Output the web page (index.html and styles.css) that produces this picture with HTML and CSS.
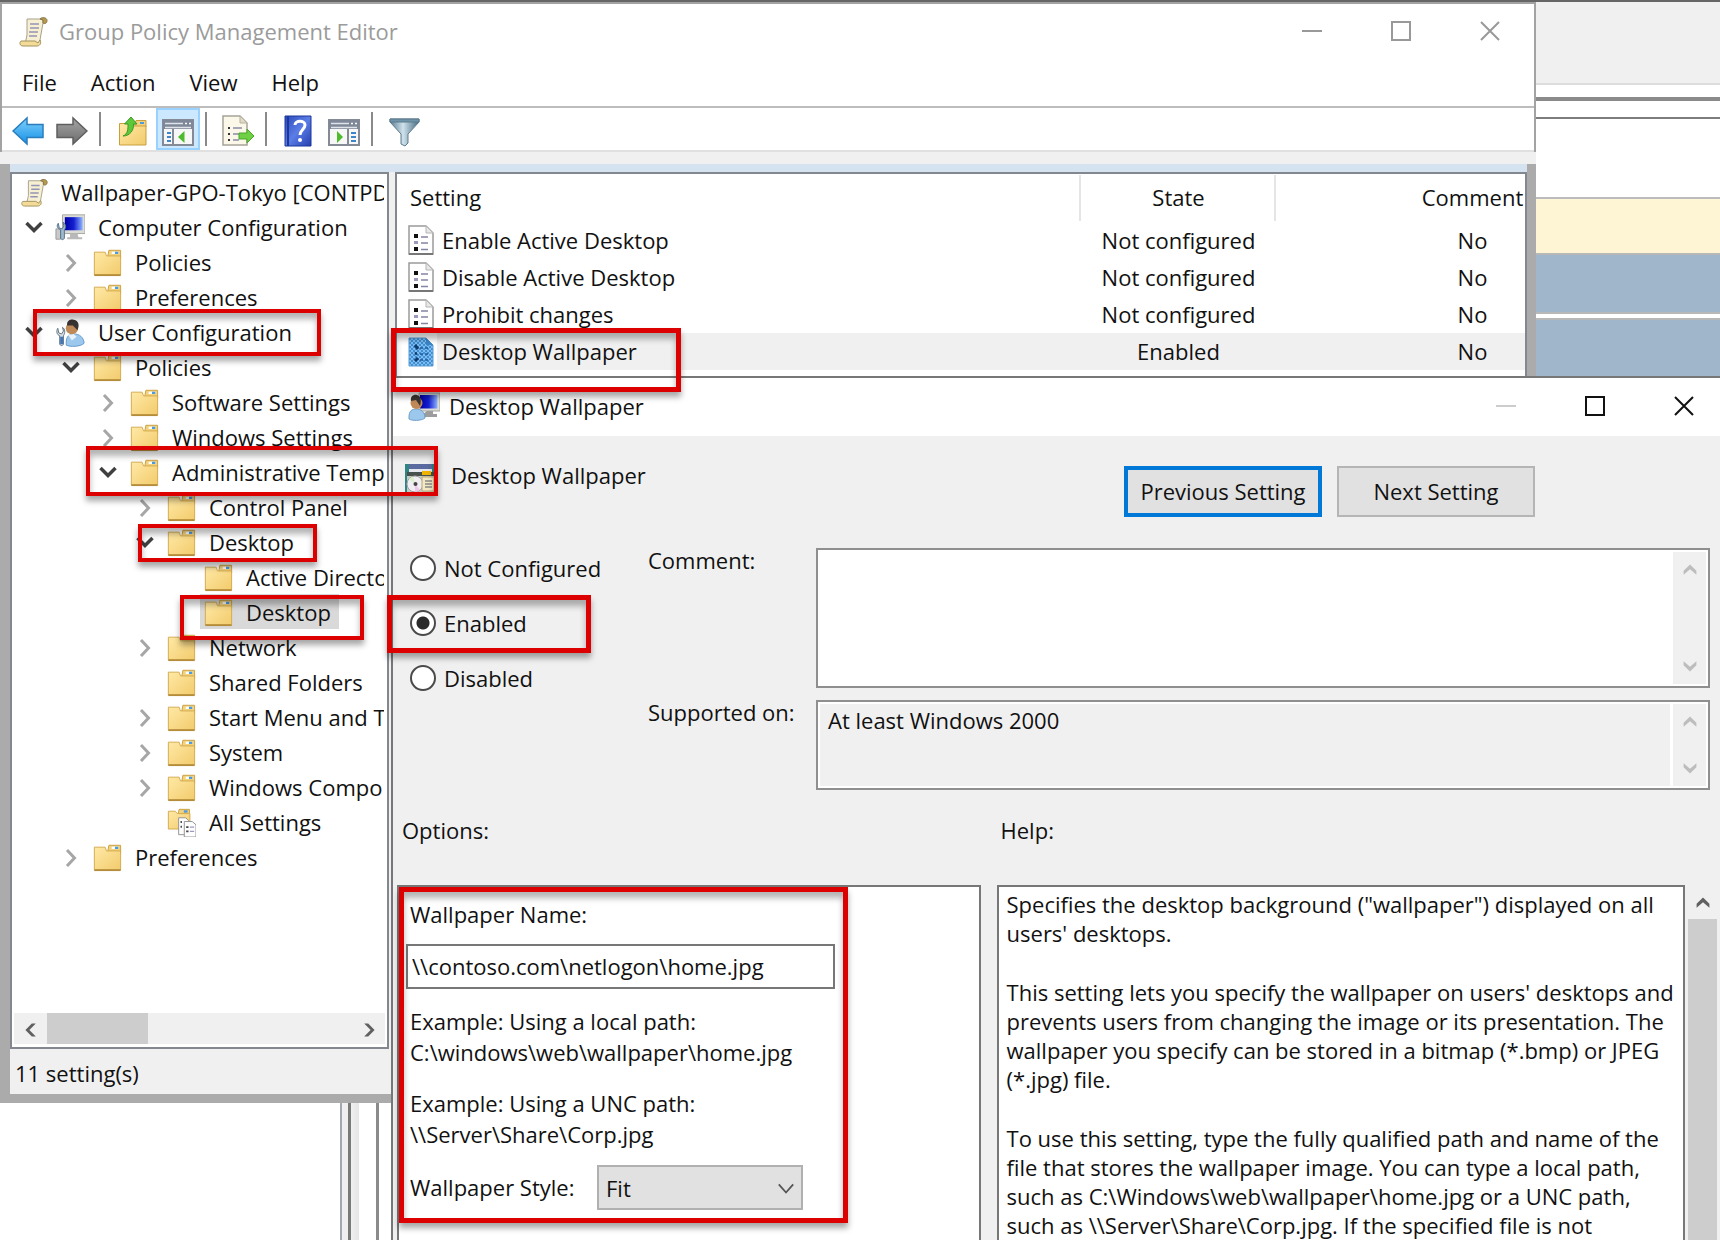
FILE: index.html
```html
<!DOCTYPE html>
<html lang="en">

<head>
    <meta charset="UTF-8">
    <meta name="viewport" content="width=device-width, initial-scale=1.0">
    <title>Group Policy Management Editor</title>
    <link rel="stylesheet" href="styles.css">
</head>

<body>

    <!-- icon set -->
    <svg class="defs" aria-hidden="true">
        <defs>
            <linearGradient id="gFolder" x1="0" y1="0" x2="1" y2="1">
                <stop offset="0" stop-color="#ffe9a6" />
                <stop offset="1" stop-color="#f2cb6c" />
            </linearGradient>
            <linearGradient id="gBlue" x1="0" y1="0" x2="0" y2="1">
                <stop offset="0" stop-color="#7fd0fb" />
                <stop offset="1" stop-color="#1590e6" />
            </linearGradient>
            <linearGradient id="gGray" x1="0" y1="0" x2="0" y2="1">
                <stop offset="0" stop-color="#a5a5a5" />
                <stop offset="1" stop-color="#6c6c6c" />
            </linearGradient>
            <linearGradient id="gScreen" x1="0" y1="0" x2="1" y2="0">
                <stop offset="0" stop-color="#0000a8" />
                <stop offset=".5" stop-color="#1420d0" />
                <stop offset="1" stop-color="#8fb4ff" />
            </linearGradient>
            <linearGradient id="gBook" x1="0" y1="0" x2="1" y2="1">
                <stop offset="0" stop-color="#2c49bb" />
                <stop offset=".5" stop-color="#5b7de6" />
                <stop offset="1" stop-color="#2440b0" />
            </linearGradient>
            <linearGradient id="gFunnel" x1="0" y1="0" x2="1" y2="0">
                <stop offset="0" stop-color="#5a7d92" />
                <stop offset=".45" stop-color="#cfe2ec" />
                <stop offset="1" stop-color="#456a80" />
            </linearGradient>
            <pattern id="dots" width="4" height="4" patternUnits="userSpaceOnUse">
                <rect width="4" height="4" fill="#7ebcf0" />
                <rect width="2" height="2" fill="#3f8fd2" />
                <rect x="2" y="2" width="2" height="2" fill="#3f8fd2" />
            </pattern>
        </defs>

        <symbol id="scroll" viewBox="0 0 32 32">
            <path d="M10 4H26V8L23 25V29H8L10 20Z" fill="#f6efd2" stroke="#a8a08a" />
            <path d="M23 4C24 2 30 2 30 5.500C30 9 27 9 26 8V5Z" fill="#b89a4c" stroke="#857348" />
            <path d="M4 26H18L21 28L23 25C25 29 22 31 20 31H6C3 31 2 28 4 26Z" fill="#f3dc98" stroke="#a3925f" />
            <path d="M13 9H22M13 13H22M12 17H21M12 21H20" stroke="#9494b4" stroke-width="1.600" />
        </symbol>

        <symbol id="folder" viewBox="0 0 32 32">
            <path d="M17 9L18 3.500H30.500V12H17Z" fill="#f3d27d" stroke="#c99f3e" />
            <path d="M21 5H28V7.500H21Z" fill="#fff" />
            <path d="M24.500 5H28V7.500H24.500Z" fill="#4b9be0" />
            <path d="M2.500 5.500H14L15.500 9.500H30.500V30H2.500Z" fill="url(#gFolder)" stroke="#d3a94b" />
            <path d="M2.500 30H30.500" stroke="#b58d3a" stroke-width="2" />
        </symbol>

        <symbol id="allsettings" viewBox="0 0 32 32">
            <path d="M13 7L14 2.500H25V12H13Z" fill="#f3d27d" stroke="#c99f3e" />
            <path d="M19 3.500H23V6H19Z" fill="#4b9be0" />
            <path d="M2.500 4.500H10L12 7H25.500V23.500H2.500Z" fill="url(#gFolder)" stroke="#d3a94b" />
            <path d="M13.500 11.500H21L24 14.500V29.500H13.500Z" fill="#fff" stroke="#8f8f8f" />
            <path d="M19.500 15.500H28L32 19V32H19.500Z" fill="#fff" stroke="#8f8f8f" />
            <path d="M15.500 16H17M15.500 21H17M21.500 21.500H24M21.500 26H24" stroke="#444" stroke-width="2" />
            <path d="M25.500 21.500H30M25.500 26H30" stroke="#9a9ac0" stroke-width="1.500" />
        </symbol>

        <symbol id="computer" viewBox="0 0 32 32">
            <path d="M8 3H32V23H8Z" fill="#dcdcd6" stroke="#a5a5a0" />
            <path d="M10.500 5.500H29.500V19.500H10.500Z" fill="url(#gScreen)" />
            <path d="M16 23H24L25 27H29V29H13V27H16Z" fill="#b9b9b9" />
            <path d="M1 18H6V29H1Z" fill="#c9c9c9" stroke="#999" />
            <path d="M3.500 12L4.500 17L7.500 18L9.500 15L8.500 11C12 13 12 17 10 19V28C9 30 7 30 6 28V19C3 18 1 15 3.500 12Z" fill="#9fb9cc" stroke="#50708a" />
        </symbol>

        <symbol id="user" viewBox="0 0 32 32">
            <path d="M12 27C12 20 16 18 20 18C26 18 31 22 31 28C27 32 16 32 12 30Z" fill="#9cc8ee" stroke="#5f97c9" />
            <path d="M14 19L20 18L23 21L18 25Z" fill="#e8f2fb" />
            <circle cx="18" cy="12" r="6.500" fill="#c08a58" />
            <path d="M13 9C12 4 17 2 20 3C26 4 26 10 24 14L19 9Z" fill="#3a3532" />
            <path d="M3 12L4 17L7 18L9 15L8 11C11 13 11 17 9 20V29C8 31 6 31 5 29V20C2 19 1 15 3 12Z" fill="#d7dde2" stroke="#5b6f80" />
            <path d="M5.500 21H8.500V29H5.500Z" fill="#3e76b8" />
        </symbol>

        <symbol id="usermonitor" viewBox="0 0 32 32">
            <path d="M11 3H32V21H11Z" fill="#dcdcd6" stroke="#a5a5a0" />
            <path d="M12 5H29.500V18.500H12Z" fill="url(#gScreen)" />
            <path d="M19 21H25V24H29V27H15V24Z" fill="#9c9c9c" />
            <path d="M1 27C1 21 4 19 8 19C13 19 17 22 17 28C13 31 4 31 1 29Z" fill="#9cc8ee" stroke="#6f9fc9" />
            <circle cx="8.500" cy="13" r="6" fill="#c08a58" />
            <path d="M3 11C2 6 6 4 9 5C14 6 13 13 12 16L8 10Z" fill="#3a3532" />
        </symbol>

        <symbol id="policy" viewBox="0 0 28 32">
            <path d="M2 1H19L26 8V29H2Z" fill="#fff" stroke="#9b9b9b" stroke-width="1.500" />
            <path d="M19 1V8H26Z" fill="#e8e8e8" stroke="#b5b5b5" />
            <path d="M2 29H26" stroke="#777" stroke-width="2" />
            <path d="M7 11H11M7 24H11" stroke="#111" stroke-width="4" />
            <path d="M7 17.500H11" stroke="#9a9ac0" stroke-width="3" />
            <path d="M14 12H21M14 18H21M14 24.500H21" stroke="#8484a4" stroke-width="1.600" />
        </symbol>

        <symbol id="policysel" viewBox="0 0 28 32">
            <path d="M2 2H19L26 9V30H2Z" fill="url(#dots)" stroke="#5a9bd5" />
            <path d="M19 2V9H26Z" fill="#3a86c8" />
            <path d="M8 9L11 13M8 18L10 17M8 25L11 22" stroke="#123a6a" stroke-width="3" />
            <path d="M13 12H22M13 18H22M13 24H22" stroke="#1d5c9c" stroke-width="1.600" stroke-dasharray="3 2" />
        </symbol>

        <symbol id="template" viewBox="0 0 32 32">
            <path d="M1 3H32V32H1Z" fill="#2d8682" />
            <path d="M5 3H28V8H5Z" fill="#5b6ba0" />
            <path d="M5 8H28V11H5Z" fill="#e6e6ee" />
            <path d="M3 11H31V15H3Z" fill="#47524e" />
            <path d="M18 10H27V14H18Z" fill="#efb400" />
            <path d="M3 15H31V32H3Z" fill="#c9c9c4" />
            <circle cx="11" cy="23" r="8" fill="#f1edf4" stroke="#a0a0a0" />
            <path d="M11 23L5 18A8 8 0 0 1 9 15.500Z" fill="#d8f2c8" />
            <path d="M11 23L16 29A8 8 0 0 1 11 31Z" fill="#eec8e8" />
            <circle cx="11.500" cy="23" r="2" fill="#444" />
            <path d="M18 16H30V30H18Z" fill="#f3e8c4" stroke="#b9a670" />
            <path d="M21 20H28M21 23H28M21 26H28" stroke="#888" stroke-width="1.500" />
        </symbol>

        <symbol id="back" viewBox="0 0 32 32">
            <path d="M1 16L15 3V9.500H31V22.500H15V29Z" fill="url(#gBlue)" stroke="#2a7dbd" stroke-width="1.500" />
        </symbol>

        <symbol id="forward" viewBox="0 0 32 32">
            <path d="M31 16L17 3V9.500H1V22.500H17V29Z" fill="url(#gGray)" stroke="#5f5f5f" stroke-width="1.500" />
        </symbol>

        <symbol id="up" viewBox="0 0 32 32">
            <path d="M19 9L20 5.500H30V12H19Z" fill="#f3d27d" stroke="#c99f3e" />
            <path d="M24 7H28V9H24Z" fill="#4b9be0" />
            <path d="M3.500 8.500H13L15 11H30V30H3.500Z" fill="url(#gFolder)" stroke="#c99f3e" />
            <path d="M7 21C12 19 12 14 12 9H8.500L15 2L21 9H17.500C18 15 14 21 7 21Z" fill="#5cc83a" stroke="#3c9a24" />
        </symbol>

        <symbol id="treepane" viewBox="0 0 32 32">
            <path d="M1 5H31V30H1Z" fill="#f7f7f7" stroke="#848a96" stroke-width="2" />
            <path d="M1 5H31V14H1Z" fill="#7f8898" />
            <path d="M3 8.500H21M3 12.500H29" stroke="#dfe3ea" stroke-width="1.500" />
            <path d="M23 8.500H25M27 8.500H29" stroke="#fff" stroke-width="1.500" />
            <path d="M11 14V30" stroke="#848a96" stroke-width="2" />
            <path d="M5 18H9M5 22H9M5 26H9" stroke="#3d86c9" stroke-width="2" />
            <path d="M22.500 16V28L16 22Z" fill="#4dbb2b" />
        </symbol>

        <symbol id="actionpane" viewBox="0 0 32 32">
            <path d="M1 5H31V30H1Z" fill="#f7f7f7" stroke="#848a96" stroke-width="2" />
            <path d="M1 5H31V14H1Z" fill="#7f8898" />
            <path d="M3 8.500H21M3 12.500H29" stroke="#dfe3ea" stroke-width="1.500" />
            <path d="M23 8.500H25M27 8.500H29" stroke="#fff" stroke-width="1.500" />
            <path d="M20 14V30" stroke="#848a96" stroke-width="2" />
            <path d="M23 18H28M23 22H28M23 26H28" stroke="#3d86c9" stroke-width="2" />
            <path d="M9 16V28L15 22Z" fill="#4dbb2b" />
        </symbol>

        <symbol id="export" viewBox="0 0 32 32">
            <path d="M1 1H18L25 8V30H1Z" fill="#fbf8ea" stroke="#a7a496" stroke-width="1.500" />
            <path d="M18 1V8H25Z" fill="#e0dcc8" stroke="#b5b19f" />
            <path d="M6 13H8M6 19H8M6 25H8" stroke="#333" stroke-width="2" />
            <path d="M11 13H20M11 19H17M11 25H17" stroke="#8a8aa8" stroke-width="1.600" />
            <path d="M32 21L25 14V18H17V24H25V28Z" fill="#6fd044" stroke="#4aa828" />
        </symbol>

        <symbol id="help" viewBox="0 0 32 32">
            <path d="M3 1H29V31H3Z" fill="url(#gBook)" stroke="#1c379c" />
            <path d="M6 1V31" stroke="#1c379c" stroke-width="2" />
            <path d="M13 10C13 5 23 5 23 10C23 14 18 15 18 20" fill="none" stroke="#fff" stroke-width="3" />
            <circle cx="18" cy="25" r="2" fill="#fff" />
        </symbol>

        <symbol id="funnel" viewBox="0 0 32 32">
            <path d="M2 4H31V7L20 19V28L17 31L13 29V19L2 7Z" fill="url(#gFunnel)" stroke="#5d7b8c" />
            <path d="M2 4H31V7H2Z" fill="#6f93a8" stroke="#5d7b8c" />
        </symbol>

        <symbol id="down" viewBox="0 0 20 20">
            <path d="M2.500 6L10 13.500L17.500 6" fill="none" stroke="currentColor" stroke-width="3.500" />
        </symbol>
        <symbol id="right" viewBox="0 0 20 20">
            <path d="M6 3L13.500 11L6 19" fill="none" stroke="currentColor" stroke-width="3" />
        </symbol>

        <symbol id="sbup" viewBox="0 0 20 20">
            <path d="M2 16V11L10 3L18 11V16L10 9Z" fill="currentColor" />
        </symbol>
        <symbol id="sbdown" viewBox="0 0 20 20">
            <path d="M2 4V9L10 17L18 9V4L10 11Z" fill="currentColor" />
        </symbol>
        <symbol id="sbleft" viewBox="0 0 20 20">
            <path d="M16 2H11L3 10L11 18H16L8 10Z" fill="currentColor" />
        </symbol>
        <symbol id="sbright" viewBox="0 0 20 20">
            <path d="M4 2H9L17 10L9 18H4L12 10Z" fill="currentColor" />
        </symbol>

        <symbol id="min" viewBox="0 0 20 20">
            <path d="M0 10H20" stroke="currentColor" stroke-width="2" />
        </symbol>
        <symbol id="max" viewBox="0 0 20 20">
            <path d="M1 1H19V19H1Z" fill="none" stroke="currentColor" stroke-width="2" />
        </symbol>
        <symbol id="close" viewBox="0 0 20 20">
            <path d="M1 1L19 19M19 1L1 19" stroke="currentColor" stroke-width="2" />
        </symbol>
    </svg>

    <div class="desktop">

        <!-- window behind -->
        <div class="backdrop">
            <div class="backTop"></div>
            <div class="backLines"></div>
            <div class="backHead"></div>
            <div class="backYellow"></div>
            <div class="backBlue"></div>
            <div class="backBlue"></div>
            <div class="backRest">
                <div class="backSplit"></div>
            </div>
        </div>

        <!-- editor window -->
        <section class="editor">
            <header class="titlebar">
                <svg class="icon"><use href="#scroll" /></svg>
                <h1 class="caption">Group Policy Management Editor</h1>
                <div class="winbtns">
                    <button type="button" aria-label="Minimize"><svg><use href="#min" /></svg></button>
                    <button type="button" aria-label="Maximize"><svg><use href="#max" /></svg></button>
                    <button type="button" aria-label="Close"><svg><use href="#close" /></svg></button>
                </div>
            </header>

            <nav class="menubar">
                <button type="button">File</button>
                <button type="button">Action</button>
                <button type="button">View</button>
                <button type="button">Help</button>
            </nav>

            <div class="toolbar">
                <button type="button" aria-label="Back"><svg class="icon"><use href="#back" /></svg></button>
                <button type="button" aria-label="Forward"><svg class="icon"><use href="#forward" /></svg></button>
                <span class="sep"></span>
                <button type="button" aria-label="Up one level"><svg class="icon"><use href="#up" /></svg></button>
                <button type="button" class="on" aria-label="Show console tree"><svg class="icon"><use href="#treepane" /></svg></button>
                <span class="sep"></span>
                <button type="button" aria-label="Export list"><svg class="icon"><use href="#export" /></svg></button>
                <span class="sep"></span>
                <button type="button" aria-label="Help"><svg class="icon"><use href="#help" /></svg></button>
                <button type="button" class="next" aria-label="Show action pane"><svg class="icon"><use href="#actionpane" /></svg></button>
                <span class="sep"></span>
                <button type="button" aria-label="Filter"><svg class="icon"><use href="#funnel" /></svg></button>
            </div>

            <div class="client">
                <div class="panes">
                    <div class="treePane">
                        <div class="tree">
                            <div class="row root"><svg class="icon"><use href="#scroll" /></svg><span>Wallpaper-GPO-Tokyo [CONTPD</span></div>
                            <ul>
                                <li>
                                    <div class="row"><button type="button" class="twisty open" aria-label="Collapse"><svg><use href="#down" /></svg></button><svg class="icon"><use href="#computer" /></svg><span>Computer Configuration</span></div>
                                    <ul>
                                        <li><div class="row"><button type="button" class="twisty" aria-label="Expand"><svg><use href="#right" /></svg></button><svg class="icon"><use href="#folder" /></svg><span>Policies</span></div></li>
                                        <li><div class="row"><button type="button" class="twisty" aria-label="Expand"><svg><use href="#right" /></svg></button><svg class="icon"><use href="#folder" /></svg><span>Preferences</span></div></li>
                                    </ul>
                                </li>
                                <li>
                                    <div class="row"><button type="button" class="twisty open" aria-label="Collapse"><svg><use href="#down" /></svg></button><svg class="icon"><use href="#user" /></svg><span>User Configuration</span></div>
                                    <ul>
                                        <li>
                                            <div class="row"><button type="button" class="twisty open" aria-label="Collapse"><svg><use href="#down" /></svg></button><svg class="icon"><use href="#folder" /></svg><span>Policies</span></div>
                                            <ul>
                                                <li><div class="row"><button type="button" class="twisty" aria-label="Expand"><svg><use href="#right" /></svg></button><svg class="icon"><use href="#folder" /></svg><span>Software Settings</span></div></li>
                                                <li><div class="row"><button type="button" class="twisty" aria-label="Expand"><svg><use href="#right" /></svg></button><svg class="icon"><use href="#folder" /></svg><span>Windows Settings</span></div></li>
                                                <li>
                                                    <div class="row"><button type="button" class="twisty open" aria-label="Collapse"><svg><use href="#down" /></svg></button><svg class="icon"><use href="#folder" /></svg><span>Administrative Temp</span></div>
                                                    <ul>
                                                        <li><div class="row"><button type="button" class="twisty" aria-label="Expand"><svg><use href="#right" /></svg></button><svg class="icon"><use href="#folder" /></svg><span>Control Panel</span></div></li>
                                                        <li>
                                                            <div class="row"><button type="button" class="twisty open" aria-label="Collapse"><svg><use href="#down" /></svg></button><svg class="icon"><use href="#folder" /></svg><span>Desktop</span></div>
                                                            <ul>
                                                                <li><div class="row leaf"><svg class="icon"><use href="#folder" /></svg><span>Active Directo</span></div></li>
                                                                <li><div class="row leaf selected"><svg class="icon"><use href="#folder" /></svg><span>Desktop</span></div></li>
                                                            </ul>
                                                        </li>
                                                        <li><div class="row"><button type="button" class="twisty" aria-label="Expand"><svg><use href="#right" /></svg></button><svg class="icon"><use href="#folder" /></svg><span>Network</span></div></li>
                                                        <li><div class="row leaf"><svg class="icon"><use href="#folder" /></svg><span>Shared Folders</span></div></li>
                                                        <li><div class="row"><button type="button" class="twisty" aria-label="Expand"><svg><use href="#right" /></svg></button><svg class="icon"><use href="#folder" /></svg><span>Start Menu and Ta</span></div></li>
                                                        <li><div class="row"><button type="button" class="twisty" aria-label="Expand"><svg><use href="#right" /></svg></button><svg class="icon"><use href="#folder" /></svg><span>System</span></div></li>
                                                        <li><div class="row"><button type="button" class="twisty" aria-label="Expand"><svg><use href="#right" /></svg></button><svg class="icon"><use href="#folder" /></svg><span>Windows Compo</span></div></li>
                                                        <li><div class="row leaf"><svg class="icon"><use href="#allsettings" /></svg><span>All Settings</span></div></li>
                                                    </ul>
                                                </li>
                                            </ul>
                                        </li>
                                        <li><div class="row"><button type="button" class="twisty" aria-label="Expand"><svg><use href="#right" /></svg></button><svg class="icon"><use href="#folder" /></svg><span>Preferences</span></div></li>
                                    </ul>
                                </li>
                            </ul>
                        </div>
                        <div class="hscroll">
                            <button type="button" aria-label="Scroll left"><svg><use href="#sbleft" /></svg></button>
                            <div class="track"><div class="thumb"></div></div>
                            <button type="button" aria-label="Scroll right"><svg><use href="#sbright" /></svg></button>
                        </div>
                    </div>

                    <div class="listPane">
                        <table>
                            <thead>
                                <tr>
                                    <th class="colSetting">Setting</th>
                                    <th class="colState">State</th>
                                    <th class="colComment">Comment</th>
                                </tr>
                            </thead>
                            <tbody>
                                <tr>
                                    <td><div class="name"><svg class="icon"><use href="#policy" /></svg><span>Enable Active Desktop</span></div></td>
                                    <td>Not configured</td>
                                    <td>No</td>
                                </tr>
                                <tr>
                                    <td><div class="name"><svg class="icon"><use href="#policy" /></svg><span>Disable Active Desktop</span></div></td>
                                    <td>Not configured</td>
                                    <td>No</td>
                                </tr>
                                <tr>
                                    <td><div class="name"><svg class="icon"><use href="#policy" /></svg><span>Prohibit changes</span></div></td>
                                    <td>Not configured</td>
                                    <td>No</td>
                                </tr>
                                <tr class="current">
                                    <td><div class="name"><svg class="icon"><use href="#policysel" /></svg><span>Desktop Wallpaper</span></div></td>
                                    <td>Enabled</td>
                                    <td>No</td>
                                </tr>
                            </tbody>
                        </table>
                    </div>
                </div>
                <footer class="status">11 setting(s)</footer>
            </div>
        </section>

        <!-- setting dialog -->
        <section class="dialog">
            <header class="titlebar">
                <svg class="icon"><use href="#usermonitor" /></svg>
                <h2 class="caption">Desktop Wallpaper</h2>
                <div class="winbtns">
                    <button type="button" disabled aria-label="Minimize"><svg><use href="#min" /></svg></button>
                    <button type="button" aria-label="Maximize"><svg><use href="#max" /></svg></button>
                    <button type="button" aria-label="Close"><svg><use href="#close" /></svg></button>
                </div>
            </header>

            <div class="intro">
                <svg class="icon"><use href="#template" /></svg>
                <span class="policyName">Desktop Wallpaper</span>
                <button type="button" class="btn focused">Previous Setting</button>
                <button type="button" class="btn">Next Setting</button>
            </div>

            <div class="state">
                <div class="radios">
                    <label><input type="radio" name="state" value="none">Not Configured</label>
                    <label><input type="radio" name="state" value="on" checked>Enabled</label>
                    <label><input type="radio" name="state" value="off">Disabled</label>
                </div>
                <div class="fields">
                    <label for="comment">Comment:</label>
                    <div class="memo">
                        <textarea id="comment"></textarea>
                        <div class="gutter">
                            <svg><use href="#sbup" /></svg>
                            <svg><use href="#sbdown" /></svg>
                        </div>
                    </div>
                    <label for="supported">Supported on:</label>
                    <div class="memo short">
                        <textarea id="supported" readonly>At least Windows 2000</textarea>
                        <div class="gutter">
                            <svg><use href="#sbup" /></svg>
                            <svg><use href="#sbdown" /></svg>
                        </div>
                    </div>
                </div>
            </div>

            <div class="columns">
                <div class="column">
                    <h3>Options:</h3>
                    <div class="box options">
                        <label for="wpName">Wallpaper Name:</label>
                        <input type="text" id="wpName" value="\\contoso.com\netlogon\home.jpg">
                        <p>Example: Using a local path:<br>C:\windows\web\wallpaper\home.jpg</p>
                        <p>Example: Using a UNC path:<br>\\Server\Share\Corp.jpg</p>
                        <div class="styleRow">
                            <label for="wpStyle">Wallpaper Style:</label>
                            <div class="selectWrap">
                                <select id="wpStyle">
                                    <option>Fit</option>
                                </select>
                                <svg viewBox="0 0 20 20"><path d="M2 6L10 15L18 6" fill="none" stroke="#555" stroke-width="2" /></svg>
                            </div>
                        </div>
                    </div>
                </div>

                <div class="column">
                    <h3 class="helpTitle">Help:</h3>
                    <div class="helpRow">
                        <div class="box help">
                            <p>Specifies the desktop background ("wallpaper") displayed on all<br>users' desktops.</p>
                            <p>This setting lets you specify the wallpaper on users' desktops and<br>prevents users from changing the image or its presentation. The<br>wallpaper you specify can be stored in a bitmap (*.bmp) or JPEG<br>(*.jpg) file.</p>
                            <p>To use this setting, type the fully qualified path and name of the<br>file that stores the wallpaper image. You can type a local path,<br>such as C:\Windows\web\wallpaper\home.jpg or a UNC path,<br>such as \\Server\Share\Corp.jpg. If the specified file is not</p>
                        </div>
                        <div class="vscroll">
                            <button type="button" aria-label="Scroll up"><svg><use href="#sbup" /></svg></button>
                            <div class="thumb"></div>
                        </div>
                    </div>
                </div>
            </div>
        </section>

        <!-- callouts -->
        <div class="mark markUser"></div>
        <div class="mark markAdmin"></div>
        <div class="mark markDesktop"></div>
        <div class="mark markSubDesktop"></div>
        <div class="mark thick markSetting"></div>
        <div class="mark thick markEnabled"></div>
        <div class="mark thick markOptions"></div>
    </div>

</body>

</html>
```
FILE: styles.css
```css
* {
    box-sizing: border-box;
}

body {
    margin: 0;
    font-family: "Open Sans", "Noto Sans", sans-serif;
    font-size: 22px;
    line-height: 24px;
    color: #111;
}

button,
input,
select,
textarea {
    font: inherit;
    color: inherit;
    margin: 0;
    padding: 0;
    border: 0;
    border-radius: 0;
    background: none;
}

h1,
h2,
h3,
p,
ul {
    margin: 0;
    padding: 0;
    font: inherit;
    list-style: none;
}

.defs {
    position: absolute;
    width: 0;
    height: 0;
}

.icon {
    width: 32px;
    height: 32px;
    flex: none;
}

.desktop {
    position: relative;
    height: 100vh;
    overflow: hidden;
    background: #fff;
}

/* window behind */
.backdrop {
    display: flex;
    flex-direction: column;
    height: 100%;
}

.backTop {
    height: 85px;
    background: #f0f0f0;
    border-top: 2px solid #666;
    border-bottom: 2px solid #ddd;
}

.backLines {
    height: 22px;
    margin-top: 12px;
    border-top: 4px solid #8a8a8a;
    border-bottom: 2px solid #7d7d7d;
}

.backHead {
    height: 80px;
    border-bottom: 2px solid #bbb;
}

.backYellow {
    height: 54px;
    background: #fdf5d3;
}

.backBlue {
    height: 61px;
    margin-bottom: 4px;
    background: #a0b6cb;
    border-top: 2px solid #b8b8b8;
    border-bottom: 2px solid #b8b8b8;
}

.backRest {
    flex: 1;
    display: flex;
}

.backSplit {
    margin-left: 340px;
    width: 39px;
    border-left: 2px solid #a3a8b3;
    border-right: 3px solid #8a8a8a;
    background: linear-gradient(to right, #f0f0f0 6px, #7a7a7a 6px, #7a7a7a 9px, #f0f0f0 9px, #e6e6e6 17px, #fff 17px);
}

/* editor window */
.editor {
    position: absolute;
    top: 2px;
    left: 0;
    right: 184px;
    bottom: 137px;
    display: flex;
    flex-direction: column;
    background: #fff;
    border: 2px solid #a3a3a3;
    border-bottom: 0;
}

.titlebar {
    display: flex;
    align-items: center;
    height: 56px;
    padding-left: 15px;
    background: #fff;
    flex: none;
}

.editor .caption {
    margin-left: 10px;
    color: #9b9b9b;
}

.winbtns {
    display: flex;
    margin-left: auto;
    color: #999;
}

.winbtns button {
    width: 89px;
    height: 52px;
    display: flex;
    align-items: center;
    justify-content: center;
}

.winbtns svg {
    width: 20px;
    height: 20px;
}

.editor .titlebar {
    padding-bottom: 2px;
}

.menubar {
    display: flex;
    align-items: center;
    gap: 34px;
    height: 48px;
    padding: 0 20px 2px;
    border-bottom: 2px solid #bdbdbd;
    flex: none;
}

.toolbar {
    display: flex;
    align-items: center;
    height: 44px;
    padding-left: 4px;
    border-bottom: 2px solid #e0e0e0;
    flex: none;
}

.toolbar button {
    display: flex;
    align-items: center;
    justify-content: center;
    width: 44px;
    height: 42px;
    padding-top: 4px;
}

.toolbar .on,
.toolbar .next {
    margin-left: 2px;
}

.toolbar .on {
    background: #cce8ff;
    border: 2px solid #99d1ff;
}

.toolbar .sep {
    width: 2px;
    height: 34px;
    margin: 0 9px 0 5px;
    background: #8a8a8a;
}

.client {
    flex: 1;
    min-height: 0;
    display: flex;
    flex-direction: column;
    margin: 0 -2px;
    padding: 0 9px 9px 10px;
    background: #ababab;
    border-top: 12px solid #f0f0f0;
}

.panes {
    flex: 1;
    min-height: 0;
    display: flex;
    gap: 6px;
    background: #f0f0f0;
    border-top: 8px solid #d5e2f0;
}

.treePane,
.listPane {
    background: #fff;
    border: 2px solid #828790;
    overflow: hidden;
}

.treePane {
    width: 379px;
    flex: none;
    display: flex;
    flex-direction: column;
    padding: 0 2px;
}

.tree {
    flex: 1;
    margin-right: 1px;
    overflow: hidden;
}

.tree ul ul {
    padding-left: 37px;
}

.row {
    display: flex;
    align-items: center;
    height: 35px;
    padding-left: 10px;
    white-space: nowrap;
}

.row.root {
    padding-left: 5px;
}

.row.leaf {
    padding-left: 41px;
}

.row .icon {
    width: 30px;
    height: 30px;
    margin-right: 13px;
}

.row.root .icon {
    margin-right: 12px;
}

.row.selected {
    width: max-content;
    margin-left: 38px;
    padding: 0 8px 0 3px;
    background: #d9d9d9;
}

.twisty {
    width: 20px;
    height: 20px;
    margin-right: 11px;
    color: #a6a6a6;
}

.twisty.open {
    color: #404040;
}

.twisty svg {
    display: block;
    width: 20px;
    height: 20px;
}

.hscroll {
    display: flex;
    height: 31px;
    margin-bottom: 3px;
    background: #f0f0f0;
    flex: none;
}

.hscroll button {
    width: 33px;
    color: #606060;
}

.hscroll svg,
.gutter svg,
.vscroll svg {
    width: 16px;
    height: 16px;
}

.track {
    flex: 1;
}

.thumb {
    background: #cdcdcd;
}

.track .thumb {
    width: 101px;
    height: 100%;
}

.listPane {
    flex: 1;
    min-width: 0;
}

.listPane table {
    width: calc(100% + 144px);
    table-layout: fixed;
    border-collapse: collapse;
}

.listPane th {
    height: 48px;
    padding: 0 0 2px;
    font-weight: normal;
    background: linear-gradient(#e5e5e5, #e5e5e5) right center / 2px 46px no-repeat;
}

.listPane th.colSetting {
    padding-left: 13px;
    text-align: left;
}

.colState {
    width: 195px;
}

.colComment {
    width: 393px;
}

.listPane td {
    height: 37px;
    padding: 0 0 2px;
    text-align: center;
}

.listPane td:first-child {
    padding: 0;
}

.name {
    display: flex;
    align-items: center;
    height: 37px;
    padding-left: 10px;
}

.name .icon {
    width: 28px;
    margin-right: 2px;
}

.name span {
    flex: 1;
    height: 37px;
    padding-left: 5px;
    line-height: 36px;
    text-align: left;
}

.current td + td,
.current .name span {
    background: #f0f0f0;
}

.status {
    height: 45px;
    padding: 12px 5px 0;
    background: #f0f0f0;
    flex: none;
}

/* setting dialog */
.dialog {
    position: absolute;
    top: 376px;
    left: 391px;
    right: -8px;
    bottom: 0;
    display: flex;
    flex-direction: column;
    background: #f0f0f0;
    border: 2px solid #777;
    border-right: 0;
    border-bottom: 0;
    overflow: hidden;
}

.dialog .titlebar {
    height: 58px;
    padding-bottom: 2px;
}

.dialog .caption {
    margin-left: 9px;
}

.dialog .winbtns {
    color: #111;
}

.dialog .winbtns button:disabled {
    color: #ccc;
}

.intro {
    display: flex;
    align-items: flex-start;
    gap: 15px;
    height: 112px;
    padding: 25px 193px 0 11px;
    flex: none;
}

.policyName {
    margin-right: auto;
    padding-top: 2px;
}

.btn {
    width: 198px;
    height: 51px;
    margin-top: 5px;
    padding-bottom: 2px;
    background: #e1e1e1;
    border: 2px solid #b5b5b5;
}

.btn.focused {
    border: 4px solid #0078d7;
}

.state {
    display: flex;
    height: 242px;
    padding: 0 18px 0 17px;
    flex: none;
}

.radios {
    display: flex;
    flex-direction: column;
    gap: 15px;
    width: 238px;
}

.radios label {
    display: flex;
    align-items: center;
    gap: 8px;
    height: 40px;
}

.radios input {
    appearance: none;
    width: 26px;
    height: 26px;
    background: #fff;
    border: 2px solid #4a4a4a;
    border-radius: 50%;
}

.radios input:checked {
    background: radial-gradient(circle, #2b2b2b 6px, #fff 7px);
}

.fields {
    flex: 1;
    display: grid;
    grid-template-columns: 168px 1fr;
    grid-template-rows: 140px 90px;
    row-gap: 12px;
}

.memo {
    display: flex;
    background: #fff;
    border: 2px solid #8f8f8f;
}

.memo textarea {
    flex: 1;
    padding: 4px 8px;
    resize: none;
    overflow: hidden;
}

.memo {
    padding: 2px;
}

.memo.short textarea {
    background: #f0f0f0;
    margin-right: 3px;
}

.gutter {
    display: flex;
    flex-direction: column;
    justify-content: space-between;
    align-items: center;
    width: 33px;
    padding: 10px 0;
    background: #f0f0f0;
    color: #bdbdbd;
}

.columns {
    flex: 1;
    min-height: 0;
    display: grid;
    grid-template-columns: 584fr 721fr;
    gap: 16px;
    padding: 28px 11px 0 4px;
}

.column {
    display: flex;
    flex-direction: column;
    min-width: 0;
}

.column h3 {
    height: 67px;
    padding-left: 5px;
}

.column .helpTitle {
    padding-left: 4px;
}

.box {
    flex: 1;
    background: #fff;
    border: 2px solid #777;
    border-bottom: 0;
}

.options {
    padding: 15px 0 0 11px;
}

.options label {
    display: block;
}

.options input {
    display: block;
    width: 429px;
    height: 45px;
    margin: 18px 0 17px -4px;
    padding: 0 4px 2px;
    border: 2px solid #777;
}

.options p {
    line-height: 31px;
    margin-bottom: 20px;
}

.styleRow {
    display: flex;
    align-items: center;
    height: 45px;
    margin-top: -5px;
}

.styleRow label {
    width: 187px;
    padding-bottom: 2px;
}

.selectWrap {
    position: relative;
    width: 206px;
}

.selectWrap select {
    appearance: none;
    display: block;
    width: 100%;
    height: 45px;
    padding: 0 7px;
    background: #e1e1e1;
    border: 2px solid #b0b0b0;
}

.selectWrap svg {
    position: absolute;
    top: 13px;
    right: 8px;
    width: 18px;
    height: 20px;
    pointer-events: none;
}

.helpRow {
    flex: 1;
    display: flex;
    gap: 3px;
}

.help {
    min-width: 0;
    padding: 3px 8px;
    line-height: 29px;
    white-space: nowrap;
    overflow: hidden;
}

.help p {
    margin-bottom: 30px;
}

.vscroll {
    width: 29px;
    display: flex;
    flex-direction: column;
}

.vscroll button {
    height: 34px;
    color: #606060;
}

.vscroll .thumb {
    flex: 1;
}

/* callouts */
.mark {
    position: absolute;
    border: 4px solid #dc0000;
    box-shadow: 0 5px 6px rgba(0, 0, 0, .35), inset 0 6px 6px rgba(0, 0, 0, .3);
    pointer-events: none;
}

.mark.thick {
    border-width: 5px;
}

.markUser {
    left: 33px;
    top: 309px;
    width: 288px;
    height: 47px;
}

.markAdmin {
    left: 86px;
    top: 446px;
    width: 352px;
    height: 50px;
}

.markDesktop {
    left: 138px;
    top: 524px;
    width: 179px;
    height: 38px;
}

.markSubDesktop {
    left: 180px;
    top: 595px;
    width: 184px;
    height: 45px;
}

.markSetting {
    left: 391px;
    top: 328px;
    width: 290px;
    height: 64px;
}

.markEnabled {
    left: 387px;
    top: 595px;
    width: 204px;
    height: 58px;
}

.markOptions {
    left: 399px;
    top: 887px;
    width: 449px;
    height: 336px;
}
```
